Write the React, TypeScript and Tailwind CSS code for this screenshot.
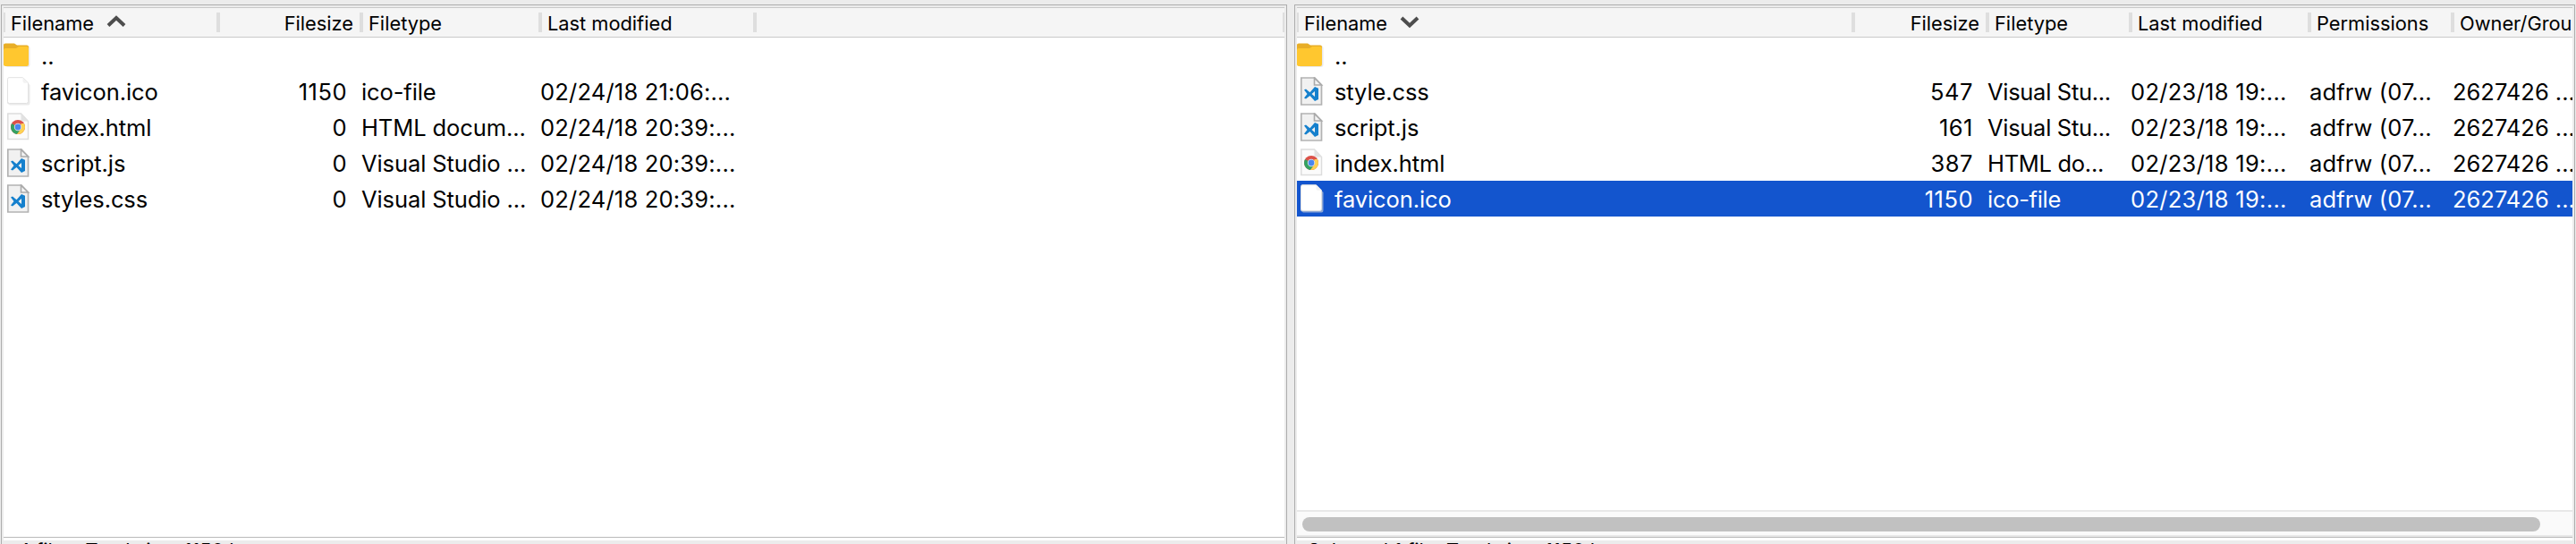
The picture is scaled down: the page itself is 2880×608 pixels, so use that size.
import React from "react";

type Column = { label: string; width: string; tracking: string; align?: "right"; sort?: "up" | "down" };
type Entry = { icon: "folder" | "blank" | "chrome" | "code"; name: string; cells: string[]; selected?: boolean };

const localColumns: Column[] = [
  { label: "Filename", width: "w-[240px]", tracking: "tracking-[-0.1px]", sort: "up" },
  { label: "Filesize", width: "w-[160px]", tracking: "tracking-[0.5px]", align: "right" },
  { label: "Filetype", width: "w-[200px]", tracking: "tracking-[-0.1px]" },
  { label: "Last modified", width: "w-[240px]", tracking: "tracking-[0.2px]" },
];

const remoteColumns: Column[] = [
  { label: "Filename", width: "w-[622px]", tracking: "tracking-[-0.1px]", sort: "down" },
  { label: "Filesize", width: "w-[150px]", tracking: "tracking-[0.5px]", align: "right" },
  { label: "Filetype", width: "w-[160px]", tracking: "tracking-[-0.3px]" },
  { label: "Last modified", width: "w-[200px]", tracking: "tracking-[0.3px]" },
  { label: "Permissions", width: "w-[160px]", tracking: "tracking-[0.1px]" },
  { label: "Owner/Group", width: "w-[160px]", tracking: "tracking-normal" },
];

const localFiles: Entry[] = [
  { icon: "folder", name: "..", cells: [] },
  { icon: "blank", name: "favicon.ico", cells: ["1150", "ico-file", "02/24/18 21:06:..."] },
  { icon: "chrome", name: "index.html", cells: ["0", "HTML docum...", "02/24/18 20:39:..."] },
  { icon: "code", name: "script.js", cells: ["0", "Visual Studio ...", "02/24/18 20:39:..."] },
  { icon: "code", name: "styles.css", cells: ["0", "Visual Studio ...", "02/24/18 20:39:..."] },
];

const remoteFiles: Entry[] = [
  { icon: "folder", name: "..", cells: [] },
  { icon: "code", name: "style.css", cells: ["547", "Visual Stu...", "02/23/18 19:...", "adfrw (07...", "2627426 ..."] },
  { icon: "code", name: "script.js", cells: ["161", "Visual Stu...", "02/23/18 19:...", "adfrw (07...", "2627426 ..."] },
  { icon: "chrome", name: "index.html", cells: ["387", "HTML do...", "02/23/18 19:...", "adfrw (07...", "2627426 ..."] },
  { icon: "blank", name: "favicon.ico", cells: ["1150", "ico-file", "02/23/18 19:...", "adfrw (07...", "2627426 ..."], selected: true },
];

function FileIcon({ kind }: { kind: Entry["icon"] }) {
  if (kind === "folder") {
    return (
      <svg className="h-8 w-8 shrink-0" viewBox="0 0 32 32">
        <path d="M0 5h26q3.500 0 3.500 3v18q0 3-3 3H4l-4-3z" fill="#e9e9ee" />
        <path d="M0 4q0-1.500 2-1.500h10l3 2h11q2 0 2 2V13H0z" fill="#e8ae27" />
        <path d="M0 10q0-2 2-2h12l3-2h9q2 0 2 2v18q0 2-2 2H3q-3 0-3-2z" fill="#ffc72f" />
      </svg>
    );
  }
  if (kind === "blank") {
    return (
      <svg className="h-8 w-8 shrink-0" viewBox="0 0 32 32">
        <path d="M5 3h18l6.500 6v20q0 2.500-2 2.500H7l-3-2z" fill="#dcdcdc" opacity=".6" />
        <path d="M6 .7h15.500l6 6V27.500q0 2-2 2H6.500q-2 0-2-2V2.700q0-2 1.500-2z" fill="#fff" stroke="#e2e2e2" strokeWidth="1" />
        <path d="M21.500 1v4q0 1.700 1.700 1.700h4z" fill="#f2f2f2" />
      </svg>
    );
  }
  if (kind === "chrome") {
    return (
      <svg className="h-8 w-8 shrink-0" viewBox="0 0 32 32">
        <path d="M4.800 1h14.700l8 8.500V29.500H4.800z" fill="#fbfbfb" stroke="#dddddd" strokeWidth="1.500" />
        <path d="M19.500 1v8.500h8z" fill="#e2e2e2" />
        <circle cx="16" cy="16" r="8" fill="#dc5148" />
        <path d="M9.100 12A8 8 0 0 0 15 23.900L19.500 18 16 16z" fill="#33a262" />
        <path d="M22.900 12A8 8 0 0 1 15 23.900L19.500 18V12z" fill="#fdd252" />
        <circle cx="16" cy="16" r="4.200" fill="#f5efe6" />
        <circle cx="16" cy="16" r="3.400" fill="#4a87ee" />
      </svg>
    );
  }
  return (
    <svg className="h-8 w-8 shrink-0" viewBox="0 0 32 32">
      <path d="M4.800 1h15.200l7.500 8V31H4.800z" fill="#f1f1f1" stroke="#b2b2b2" strokeWidth="1.700" />
      <path d="M19.500 1.200V9h8z" fill="#f4f4f4" stroke="#aaa" strokeWidth="1.600" />
      <path d="M8 14.500l2-1 4.500 3.700L20 11l4 1.700V25L20 27 14.500 21 10 24.500l-2-1 3.500-4.500zM20 16l-3.500 3 3.500 3z" fill="#1580cd" fillRule="evenodd" />
    </svg>
  );
}

function Separator() {
  return <span className="mt-[5px] h-[22px] w-1 shrink-0 bg-[#dedede]" />;
}

function Header({ columns, remote }: { columns: Column[]; remote: boolean }) {
  return (
    <div className="flex h-[34px] shrink-0 border-y border-[#c9c9c9] bg-[#f5f5f5] text-[21.8px] leading-[34px]">
      <span className="mt-[5px] h-[22px] w-0.5 shrink-0 bg-[#dedede]" />
      {columns.map((c) => (
        <div key={c.label} className={`flex shrink-0 ${c.width}`}>
          <div className={`flex flex-1 items-start overflow-hidden whitespace-nowrap ${c.align ? "justify-end pr-[7px]" : "pl-1.5"}`}>
            {c.label}
            {c.sort && (
              <svg className="mt-1.5 ml-[14px] h-[18px] w-[22px]" viewBox="0 0 22 18" fill="none" stroke="#4d4d4d" strokeWidth="4">
                <path d={c.sort === "up" ? "M2 13.500 11 5l9 8.500" : "M2 5l9 8.500L20 5"} />
              </svg>
            )}
          </div>
          <Separator />
        </div>
      ))}
      {!remote && (
        <div className="flex flex-1 justify-end">
          <span className="mt-[5px] h-[22px] w-0.5 bg-[#dedede]" />
        </div>
      )}
    </div>
  );
}

function Row({ entry, columns }: { entry: Entry; columns: Column[] }) {
  return (
    <div className={`flex h-10 shrink-0 text-[25.5px] leading-[42px] whitespace-nowrap ${entry.selected ? "bg-[#1355ce] text-white" : "text-black"}`}>
      <div className={`flex shrink-0 pt-1 ${columns[0].width} ${columns[0].tracking}`}>
        <FileIcon kind={entry.icon} />
        <span className="-mt-1 ml-[10px]">{entry.name}</span>
      </div>
      {entry.cells.map((text, i) => (
        <div key={i} className={`shrink-0 ${columns[i + 1].width} ${columns[i + 1].tracking} ${i === 0 ? "pr-[16px] text-right" : ""}`}>
          {text}
        </div>
      ))}
    </div>
  );
}

function Pane({ columns, files, status, remote = false }: { columns: Column[]; files: Entry[]; status: string; remote?: boolean }) {
  return (
    <section className={`flex h-[603px] shrink-0 flex-col border-x border-t border-[#adadad] px-0.5 pt-0.5 ${remote ? "w-[1432px]" : "w-[1438px]"}`}>
      <div className="flex h-[592px] shrink-0 flex-col overflow-hidden bg-white">
        <Header columns={columns} remote={remote} />
        <div className="flex flex-1 flex-col">
          {files.map((f) => (
            <Row key={f.name} entry={f} columns={columns} />
          ))}
        </div>
        {remote && (
          <div className="h-[30px] shrink-0 border-y-2 border-[#e8e8e8] bg-[#fafafa] pt-1.5 pl-1.5">
            <div className="h-4 w-[1384px] rounded-full bg-[#c1c1c1]" />
          </div>
        )}
      </div>
      <div className="h-1 shrink-0 border-t border-[#b9b9b9] bg-white" />
      <div className={`h-1 shrink-0 overflow-hidden text-[21.8px] leading-[23px] whitespace-nowrap ${remote ? "pl-3" : "pl-4"}`}>
        {status}
      </div>
    </section>
  );
}

export default function App() {
  return (
    <main className="flex h-[608px] w-[2880px] gap-2 overflow-hidden bg-[#ececec] pt-[5px] pl-px font-['Inter',sans-serif] text-black">
      <Pane columns={localColumns} files={localFiles} status="4 files. Total size: 1150 bytes" />
      <Pane columns={remoteColumns} files={remoteFiles} status="Selected 1 file. Total size: 1150 bytes" remote />
    </main>
  );
}
